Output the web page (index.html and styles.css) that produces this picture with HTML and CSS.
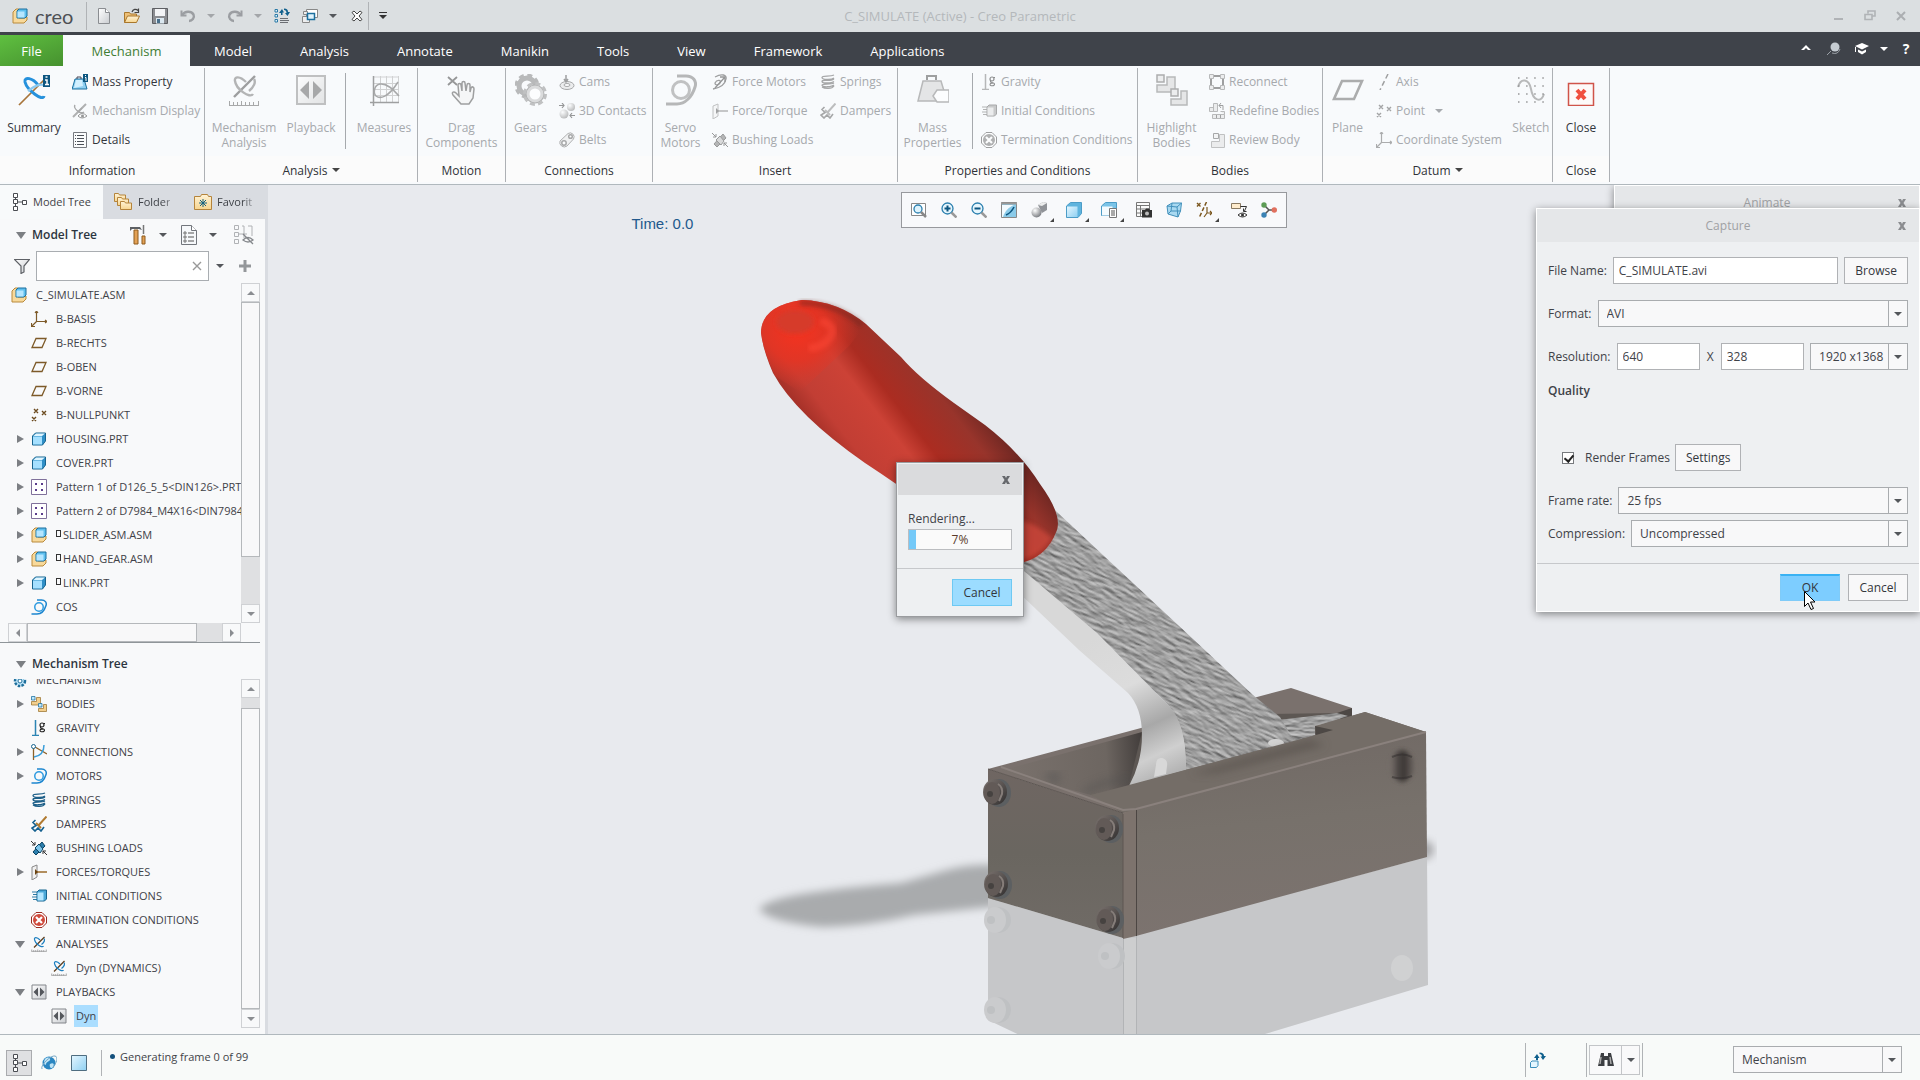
FILE: index.html
```html
<!DOCTYPE html>
<html lang="en">
<head>
<meta charset="utf-8">
<title>C_SIMULATE (Active) - Creo Parametric</title>
<link rel="stylesheet" href="styles.css">
</head>
<body>
<svg class="defs" aria-hidden="true">
  <defs>
    <linearGradient id="ice" x1="0" y1="0" x2="1" y2="1"><stop offset="0" stop-color="#e4f6ff"/><stop offset="1" stop-color="#8fd0f2"/></linearGradient>
    <linearGradient id="silver" x1="0" y1="0" x2="1" y2="1"><stop offset="0" stop-color="#fff"/><stop offset="1" stop-color="#c9ccd0"/></linearGradient>
    <linearGradient id="sand" x1="0" y1="0" x2="0" y2="1"><stop offset="0" stop-color="#fff3d6"/><stop offset="1" stop-color="#f7d590"/></linearGradient>
    <radialGradient id="ball" cx=".35" cy=".3" r=".8"><stop offset="0" stop-color="#fff"/><stop offset="1" stop-color="#6d7075"/></radialGradient>
  </defs>
  <symbol id="asm" viewBox="0 0 16 16"><path d="M1 4l3-3h3v9h5l3-1v3l-3 3H1z" fill="#f8d99a" stroke="#b98a3c"/><path d="M5 3l2-2h8v7l-2 2H5z" fill="#5fc0ef" stroke="#1b6f9e"/><path d="M5.500 3.500h7v6h-7z" fill="#b6e6ff"/></symbol>
  <symbol id="part" viewBox="0 0 16 16"><path d="M1.500 5l3-3h10v8l-3 4h-10z" fill="#2f8fc7" stroke="#17648f"/><path d="M2 5.500h9v8H2z" fill="#a5e0ff"/><path d="M2.500 5l2.500-2.500h9L11 5z" fill="#dff5ff"/></symbol>
  <symbol id="new" viewBox="0 0 16 16"><path d="M2.500.5h7l4 4v11h-11z" fill="url(#silver)" stroke="#8a8d91"/><path d="M9.500.5v4h4" fill="#fff" stroke="#8a8d91"/></symbol>
  <symbol id="open" viewBox="0 0 16 16"><path d="M.5 14.500v-10h5l1 1.500h6v3" fill="#eec077" stroke="#a9772c"/><path d="M.5 14.500l3-6.500h12l-3 6.500z" fill="url(#sand)" stroke="#a9772c"/><path d="M8 4c1-3 4-3.500 6-1.500M14.500.5v4h-4" fill="none" stroke="#444" stroke-width="1.200"/></symbol>
  <symbol id="save" viewBox="0 0 16 16"><path d="M.5.5h15v15h-15z" fill="#8b8d91" stroke="#5d5f63"/><path d="M3 1h10v7H3z" fill="#f3f4f6"/><path d="M4 10h8v5.500H4z" fill="#dbe8f0"/><path d="M5 11h3v4H5z" fill="#4a6f8a"/></symbol>
  <symbol id="undo" viewBox="0 0 16 16"><path d="M1.500 2.500v5h5" fill="none" stroke="#9b9ea2" stroke-width="2"/><path d="M2 7C5 3 11 2.500 13.500 6.500 15 10 12 13 9 13" fill="none" stroke="#9b9ea2" stroke-width="2.400"/></symbol>
  <symbol id="regen" viewBox="0 0 16 16"><path d="M1 1.500h2.500V4H1zM1 6.500h2.500V9H1zM1 11.500h2.500V14H1z" fill="#e2f4fd" stroke="#2b7aa6"/><path d="M6 10.500h8M6 12.500h9M6 14.500h8" stroke="#6b6e73"/><path d="M5 5l3-4 2 3.500H8.500V7H7V5zM16 4l-2.500 4L11 5h1.500c0-2-1-3-2.500-3V.5c3 0 4 1.500 4 3.500z" fill="#0f5f8c"/></symbol>
  <symbol id="windows" viewBox="0 0 16 16"><path d="M4.500 1.500h11v8h-11z" fill="#fff" stroke="#888"/><path d="M.5 8.500h7v6h-7zM1.500 3.500h4v3h-4z" fill="#eee" stroke="#888"/><path d="M5.500 5.500h7v6h-7z" fill="#dff3fd" stroke="#1b6f9e" stroke-width="1.500"/></symbol>
  <symbol id="closewin" viewBox="0 0 16 16"><path d="M3 4.500L5 3l3 3 3-3 2 1.500L10 8l3 3.500-2 1.500-3-3-3 3-2-1.500L6 8z" fill="#fff" stroke="#444"/></symbol>
  <symbol id="summary" viewBox="0 0 32 32"><path d="M1 31L27 5" stroke="#a8743a" stroke-width="1.700"/><path d="M26 22c-1 6-17-6-19-14-1-6 8-4 13 3" fill="none" stroke="#2691dc" stroke-width="3"/><path d="M10 17c7-6 14-8 17-5" fill="none" stroke="#8ccaf0" stroke-width="2.400"/><path d="M25 1h7v12h-7z" fill="#0d5680"/><path d="M27.500 3h2M27 6h2v4.500M27 10.500h4" fill="none" stroke="#fff" stroke-width="1.500"/></symbol>
  <symbol id="massinfo" viewBox="0 0 16 16"><path d="M3 5h9l3 10H0l1-3z" fill="#8fd0f2" stroke="#1b6f9e"/><path d="M5 5V3h4v2" fill="none" stroke="#445"/><path d="M4 6h6l1 6-9 2z" fill="#d3f0ff"/><path d="M11 0h5v8h-5z" fill="#0d5680"/><path d="M13 1.500h1M13 3.500h1V7" stroke="#fff" fill="none"/></symbol>
  <symbol id="mechdisp" viewBox="0 0 16 16"><path d="M1 14L14 1" stroke="#666" stroke-width="2"/><path d="M12 9C8 12 1 5 3 2M7 8l3-3" fill="none" stroke="#555" stroke-width="1.400"/><path d="M6 13q4-5 9 0-5 4-9 0z" fill="#fff" stroke="#333"/><circle cx="10.500" cy="13" r="1.500" fill="#333"/></symbol>
  <symbol id="details" viewBox="0 0 16 16"><path d="M1.500.5h13v15h-13z" fill="#fbfcfd" stroke="#777a80"/><path d="M5 3.500h7M5 6.500h7M5 9.500h7M5 12.500h7" stroke="#4c5058"/><path d="M3 3.500h1M3 6.500h1M3 9.500h1M3 12.500h1" stroke="#4c5058"/></symbol>
  <symbol id="analysis" viewBox="0 0 32 32"><path d="M6 23L27 2" stroke="#5e3d1a" stroke-width="2.400"/><path d="M25 20c-3 5-17-5-18-13-1-5 5-5 11 1M21 17c5-4 7-9 5-12" fill="none" stroke="#1c7fbf" stroke-width="2.400"/><path d="M1 31.500h30M1.500 31v-4M5.500 31v-3M9.500 31v-3M13.500 31v-4M17.500 31v-3M21.500 31v-3M25.500 31v-3M30.500 31v-4" stroke="#555" fill="none"/></symbol>
  <symbol id="play" viewBox="0 0 32 32"><path d="M2 2h28v28H2z" fill="url(#silver)" stroke="#83868b" stroke-width="2"/><path d="M14 7v18L5 16zM18 7v18l9-9z" fill="#54575c"/></symbol>
  <symbol id="measure" viewBox="0 0 32 32"><path d="M6 3h25M6 9.500h25M6 15.500h25M6 21.500h25M12.500 2v26M18.500 2v26M24.500 2v26M30.500 2v26" stroke="#a9abaf" fill="none"/><path d="M5.500 2v30M2 28.500h29" stroke="#444" stroke-width="1.500"/><path d="M30 8C20 24 12 25 8 22c-3-3-2-11 4-12 7-1 13 5 19 12" fill="none" stroke="#555" stroke-width="1.500"/></symbol>
  <symbol id="drag" viewBox="0 0 32 32"><path d="M2 3l9 8M11 3l-9 8" stroke="#333" stroke-width="1.800"/><path d="M15 30l-8-9c-2-3 1-4 3-2l3 3-1-11c0-2 3-2 3 0l1 6V9c0-2 3-2 3 0l1 8 1-6c0-2 3-2 3 0v7l1-4c1-2 3-1 3 1l-1 9-4 6z" fill="#f1f1f1" stroke="#444" stroke-width="1.500"/></symbol>
  <symbol id="gears" viewBox="0 0 32 32"><circle cx="12" cy="12" r="8" fill="none" stroke="#777" stroke-width="5"/><circle cx="12" cy="12" r="11" fill="none" stroke="#777" stroke-width="3" stroke-dasharray="5 3.640"/><circle cx="20" cy="20" r="7" fill="#fff" stroke="#666" stroke-width="5"/><circle cx="20" cy="20" r="7" fill="#fff" stroke="#bbb" stroke-width="3"/><circle cx="20" cy="20" r="10.500" fill="none" stroke="#888" stroke-width="3" stroke-dasharray="5 3.250"/></symbol>
  <symbol id="cam" viewBox="0 0 16 16"><ellipse cx="8" cy="11.500" rx="7" ry="4" fill="#ddd" stroke="#555"/><ellipse cx="8" cy="11" rx="3" ry="1.500" fill="#fff" stroke="#555"/><path d="M7 8V1M5 5l2 3 2-3" fill="none" stroke="#444" stroke-width="1.500"/></symbol>
  <symbol id="contact" viewBox="0 0 16 16"><circle cx="5" cy="11" r="4.500" fill="url(#ball)"/><circle cx="12" cy="4" r="4" fill="url(#ball)"/><path d="M0 2.500h5M3 0l2 2.500L3 5M16 12.500h-5M13 10l-2 2.500 2 2.500" fill="none" stroke="#333" stroke-width="1.200"/></symbol>
  <symbol id="belt" viewBox="0 0 16 16"><path d="M1 9L9 1.500a4 4 0 0 1 5.500 5.500L8 14a4.500 4.500 0 0 1-7-5z" fill="#e8e8e8" stroke="#666"/><circle cx="5" cy="11" r="2.200" fill="#fff" stroke="#555" stroke-width="1.500"/><circle cx="11.500" cy="4.500" r="1.800" fill="#fff" stroke="#555" stroke-width="1.500"/></symbol>
  <symbol id="motor" viewBox="0 0 32 32"><circle cx="16" cy="16" r="8.500" fill="none" stroke="#2e9be0" stroke-width="3"/><path d="M12 2h9c7 0 11 5 9 11-3 10-10 17-18 17H1" fill="none" stroke="#1c86cf" stroke-width="3"/></symbol>
  <symbol id="fmotor" viewBox="0 0 16 16"><path d="M3 3c7-4 12-2 11 2-1 6-7 9-13 10M3 9c2-4 7-3 5 0-1 2-5 3-5 0z" fill="none" stroke="#444" stroke-width="1.300"/><path d="M3 14L13 3M13 8V3H8" fill="none" stroke="#333" stroke-width="1.300"/></symbol>
  <symbol id="force" viewBox="0 0 16 16"><path d="M1 3l5-2v12l-5 3z" fill="#f1f1f1" stroke="#888"/><path d="M4 8h12" stroke="#9b6a2a" stroke-width="1.500"/><path d="M4 5v6l3-3z" fill="#6a4310"/></symbol>
  <symbol id="bushing" viewBox="0 0 16 16"><path d="M2 12l3 3 9-9-3-4z" fill="#2b7fae" stroke="#0b4363"/><path d="M4 8l5 5 3-4-4-5z" fill="#7dc5ea" stroke="#0b4363"/><path d="M0 1l4 4M4 2v3H1M16 15l-4-4M15 11h-3v3" fill="none" stroke="#333"/></symbol>
  <symbol id="spring" viewBox="0 0 16 16"><path d="M14 1C10 3 2 1 2 3.500S12 6 14 4M14 5c-4 3-12 0-12 2.500S12 9 14 7.500M14 9c-4 2-12 0-12 2.300S12 13 14 11M14 12c-2 3-9 3-12 1" fill="none" stroke="#1d5f88" stroke-width="1.300"/></symbol>
  <symbol id="damper" viewBox="0 0 16 16"><path d="M15.500.5L7 10M5 7l5 5" stroke="#b07a30" stroke-width="2"/><path d="M4.500 4L2 6.500l3 3L1 12l3 3 3-3 3 3 3-4" fill="none" stroke="#14608f" stroke-width="1.600"/></symbol>
  <symbol id="weight" viewBox="0 0 32 32"><path d="M6 7h18l6 20H1z" fill="#cfd0d2" stroke="#777" stroke-width="1.500"/><path d="M10 6V2h9v4" fill="none" stroke="#444" stroke-width="2"/><path d="M16 22l4-6h12v12H20z" fill="#fff" stroke="#777" stroke-width="1.500"/></symbol>
  <symbol id="gravity" viewBox="0 0 16 16"><path d="M4.500 0v15M1 15.500h7" stroke="#2b84b3" stroke-width="1.500"/><circle cx="11" cy="5" r="2" fill="none" stroke="#222" stroke-width="1.200"/><path d="M12.500 3.500H14M10 7c-2 2 3 1 3.500 3s-4.500 2.500-4.500.5 2-1 3-1.500" fill="none" stroke="#222" stroke-width="1.100"/></symbol>
  <symbol id="initial" viewBox="0 0 16 16"><path d="M1 4h5M2 6.500h4M1 9h5M2 11.500h4" stroke="#2e7ba5"/><path d="M6 4l2-2h7.500v9l-2 2H6z" fill="#4ba8d8" stroke="#17648f"/><path d="M6.500 4.500h6v8h-6z" fill="#b5e6ff"/></symbol>
  <symbol id="term" viewBox="0 0 16 16"><path d="M5 .5h6L15.500 5v6L11 15.500H5L.5 11V5z" fill="#fff" stroke="#9b2d22"/><circle cx="8" cy="8" r="6" fill="#cf4a3c"/><path d="M5 5l6 6M11 5l-6 6" stroke="#fff" stroke-width="2.200"/></symbol>
  <symbol id="bodies" viewBox="0 0 32 32"><path d="M1 11h10V3h8v15H1zM15 25h10v-8h6v14H15z" fill="#f3cf8d" stroke="#9a7430" stroke-width="1.500"/><path d="M1 1h7v7H1zM15 15h7v7h-7z" fill="#bfe8fb" stroke="#1b6f9e" stroke-width="1.500"/></symbol>
  <symbol id="reconnect" viewBox="0 0 16 16"><path d="M5 2h6M5 14h6M2 5v6M14 5v6" stroke="#444" stroke-width="2"/><path d="M.5.5h4v4h-4zM11.500.5h4v4h-4zM.5 11.500h4v4h-4zM11.500 11.500h4v4h-4z" fill="#ddd" stroke="#777"/></symbol>
  <symbol id="redefine" viewBox="0 0 16 16"><path d="M.5 4.500h4v4h-4zM4.500.5h4v8h-4zM3.500 11.500h12v4h-12zM11.500 8.500h4v3" fill="#ddd" stroke="#777"/><path d="M7.500 12v3M11.500 12v3M10 2.500h4V7M12 0l-2 2.500L12 5" stroke="#444" fill="none"/></symbol>
  <symbol id="review" viewBox="0 0 16 16"><path d="M2.500 9.500h8v-7h5v13h-13z" fill="#ddd" stroke="#888"/><path d="M4.500 1.500h5v5h-5z" fill="#eee" stroke="#555"/></symbol>
  <symbol id="plane" viewBox="0 0 16 16"><path d="M5 3.500h10l-4 9H1z" fill="none" stroke="#7d5a28" stroke-width="1.300"/></symbol>
  <symbol id="axis" viewBox="0 0 16 16"><path d="M12 0L4 16" stroke="#444" stroke-width="1.500" stroke-dasharray="5 3"/></symbol>
  <symbol id="points" viewBox="0 0 16 16"><path d="M3 2l4 4M7 2L3 6M11 4l4 4M15 4l-4 4M1 10l4 4M5 10l-4 4" stroke="#6b4a1e" stroke-width="1.400"/></symbol>
  <symbol id="csys" viewBox="0 0 16 16"><path d="M5.500 0v10.500H16M5.500 10.500L.5 15.500M4 2l1.500-2L7 2M14 9l2 1.500-2 1.500M.5 12v3.500H4" fill="none" stroke="#7d5a28" stroke-width="1.200"/></symbol>
  <symbol id="sketch" viewBox="0 0 32 32"><path d="M3 13c3-10 11-8 13 2 2 12 10 14 13 5" fill="none" stroke="#777" stroke-width="2"/><path d="M3 4h27M3 12h27M3 20h27M3 28h27" stroke="#333" stroke-dasharray="1.500 6.600" stroke-width="1.500"/></symbol>
  <symbol id="closebox" viewBox="0 0 32 32"><path d="M3.500 9.500h25v22h-25z" fill="#fdfaf9" stroke="#d0544a" stroke-width="1.500"/><path d="M12 16l8 9M20 16l-8 9" stroke="#f0503f" stroke-width="4"/></symbol>
  <symbol id="tree" viewBox="0 0 16 20"><path d="M2.500 1.500h4v4h-4zM2.500 7.500h4v4h-4zM2.500 14.500h4v4h-4zM11.500 8.500h4v4h-4z" fill="#fff" stroke="#4a4d52"/><path d="M4.500 5.500v2M4.500 11.500v3M6.500 10h5" stroke="#4a4d52"/></symbol>
  <symbol id="folders" viewBox="0 0 20 20"><path d="M1.500 9.500v-8h4l1 1.500h6v6.500z" fill="url(#sand)" stroke="#b5843b"/><path d="M4.500 13.500v-8h4l1 1.500h6v6.500z" fill="url(#sand)" stroke="#b5843b"/><path d="M7.500 17.500v-8h4l1 1.500h6v6.500z" fill="url(#sand)" stroke="#b5843b"/></symbol>
  <symbol id="fav" viewBox="0 0 18 16"><path d="M.5 15.500v-13h6l1-2h6l1 2h3v13z" fill="url(#sand)" stroke="#b5843b"/><path d="M9 5v8M5 9h8M6 6l6 6M12 6l-6 6" stroke="#14607f"/></symbol>
  <symbol id="tools" viewBox="0 0 18 20"><path d="M1 2h10l2 3-3-1H3L1 6z" fill="#5d6064"/><path d="M5 5h4v14H5z" fill="#e3a155" stroke="#8d5a1c"/><path d="M14.500 0v9" stroke="#777" stroke-width="1.500"/><path d="M13 11h3v8h-3z" fill="#e3a155" stroke="#8d5a1c"/></symbol>
  <symbol id="list" viewBox="0 0 16 20"><path d="M.5.5h10l5 5v14H.5z" fill="#f6f8fa" stroke="#72767c"/><path d="M10.500.5v5h5" fill="#fff" stroke="#72767c"/><path d="M7 8h6M7 12h6M7 16h6" stroke="#555"/><path d="M3 7h2v2H3zM3 11h2v2H3zM3 15h2v2H3z" fill="#fff" stroke="#555" stroke-width=".8"/></symbol>
  <symbol id="treehide" viewBox="0 0 20 20"><path d="M.5.5h4v4h-4zM.5 7.500h4v4h-4zM.5 14.500h4v4h-4zM8 1h2v12M14 1h4v10M5 9h8" fill="none" stroke="#b0b2b5"/><path d="M9 15q5-5 10 0-5 4-10 0zM9 9l10 10" fill="none" stroke="#85888c" stroke-width="1.300"/></symbol>
  <symbol id="funnel" viewBox="0 0 16 16"><path d="M.5 1.500h15L10 8v6l-3 1.500V8z" fill="url(#silver)" stroke="#5e6166" stroke-width="1.200"/></symbol>
  <symbol id="pattern" viewBox="0 0 16 16"><path d="M.5.500h15v15H.5z" fill="#fff" stroke="#80719b"/><path d="M4 4h2v2H4zM10 4h2v2h-2zM4 10h2v2H4zM10 10h2v2h-2z" fill="#5b3d8c"/></symbol>
  <symbol id="mech" viewBox="0 0 16 16"><circle cx="9" cy="9" r="5" fill="#bfe6fa" stroke="#1f6f9b" stroke-width="2.500" stroke-dasharray="2.500 1.200"/><circle cx="9" cy="9" r="2" fill="#fff" stroke="#1f6f9b"/><path d="M0 5h5" stroke="#555" stroke-width="2"/></symbol>
  <symbol id="conn" viewBox="0 0 16 16"><path d="M2.500 4v12M4 3l12 7" stroke="#8d6128" stroke-width="1.300"/><path d="M13 1c0 7-4 11-10 12" fill="none" stroke="#3b9fda" stroke-width="1.500"/><circle cx="2.500" cy="2.500" r="2" fill="#fff" stroke="#17648f"/></symbol>
  <symbol id="zoomfit" viewBox="0 0 16 16"><path d="M.5 1.500h14v12H.5z" fill="#fff" stroke="#888"/><circle cx="7" cy="7" r="4" fill="#def3fc" stroke="#2b7fae" stroke-width="1.300"/><path d="M10 10l5 5" stroke="#888" stroke-width="2.500"/></symbol>
  <symbol id="zoomin" viewBox="0 0 16 16"><circle cx="6.500" cy="6.500" r="5.500" fill="#e6f6fd" stroke="#2b7fae" stroke-width="1.300"/><path d="M3.500 6.500h6M6.500 3.500v6" stroke="#0c5580" stroke-width="2"/><path d="M10.500 10.500l5 5" stroke="#999" stroke-width="2.500"/></symbol>
  <symbol id="zoomout" viewBox="0 0 16 16"><circle cx="6.500" cy="6.500" r="5.500" fill="#e6f6fd" stroke="#2b7fae" stroke-width="1.300"/><path d="M3.500 6.500h6" stroke="#0c5580" stroke-width="2"/><path d="M10.500 10.500l5 5" stroke="#999" stroke-width="2.500"/></symbol>
  <symbol id="repaint" viewBox="0 0 16 16"><path d="M.5.500h15v15H.5z" fill="#8bcbe9" stroke="#888"/><path d="M1 3h12C8 5 4 9 2 15H1z" fill="#f3fbff"/><path d="M13 5Q10 11 5 13" stroke="#0c5580" stroke-width="1.600" fill="none"/><path d="M0 1.500h16" stroke="#999" stroke-width="2"/></symbol>
  <symbol id="render" viewBox="0 0 16 16"><path d="M7 3l5-3 4 1v7l-5 3z" fill="#909398"/><path d="M7 3l5-3 4 1-5 3z" fill="#eceded"/><circle cx="5.500" cy="10.500" r="5" fill="url(#ball)"/></symbol>
  <symbol id="shade" viewBox="0 0 16 16"><path d="M.5 4l4-3.500h11v11L12 15.500H.5z" fill="#5fb4de" stroke="#4c9cc7"/><path d="M1 4.500h10.500v10.500H1z" fill="url(#ice)"/></symbol>
  <symbol id="saved" viewBox="0 0 16 16"><path d="M.5 4l4-3.500h11v9L10 13.500H.5z" fill="#7bc4e8" stroke="#4c9cc7"/><path d="M1 4.500h10.500v9H1z" fill="#f4fbff"/><path d="M8.500 6.500h7v9h-7z" fill="#fff" stroke="#777"/><path d="M10 9h4M10 11h4M10 13h4" stroke="#555"/></symbol>
  <symbol id="viewmgr" viewBox="0 0 16 16"><path d="M.5.500h13v14H.5zM.5 3.500h13M4.500 3.500v11M.5 7h13M.5 11h13" fill="#fafafa" stroke="#777"/><path d="M6 8h3l1-1.500h3L14 8h2v7.500H6z" fill="#333"/><circle cx="11" cy="11.500" r="2" fill="#bbb"/></symbol>
  <symbol id="persp" viewBox="0 0 16 16"><path d="M1 4l5-3h9.500l-1 8L12 15 2 12z" fill="#a9d9f1" stroke="#4290bb"/><path d="M1 4l10 1 4.500-4M11 5l1 10M6 1L5 9l-3 3M5 9l9.500 0" fill="none" stroke="#4290bb"/></symbol>
  <symbol id="datums" viewBox="0 0 16 16"><path d="M1 1l3.500 3.500M4.500 1L1 4.500" fill="none" stroke="#7b571f" stroke-width="1.400"/><path d="M10.500 0L3 16" stroke="#7b571f" stroke-width="1.500" stroke-dasharray="4 2"/><path d="M11 5v6h5M11 11l-3 4M14 9l2 2-2 2" fill="none" stroke="#7b571f" stroke-width="1.200"/></symbol>
  <symbol id="annot" viewBox="0 0 16 16"><path d="M.5 1.500h9v5h-9z" fill="#ffeccd" stroke="#8a7a62"/><path d="M9.500 4.500h6l-2 4.500M12.500 6.500v3h3" fill="none" stroke="#333"/><path d="M7 13q4.500-4 9 0-4.500 4-9 0z" fill="#fff" stroke="#333"/><circle cx="11.500" cy="13" r="1.500" fill="#333"/></symbol>
  <symbol id="spin" viewBox="0 0 16 16"><path d="M3 3l5 5M3 13l5-5h5" stroke="#555" stroke-width="1.500" fill="none"/><circle cx="3" cy="3" r="2.700" fill="#5d9c56"/><circle cx="3" cy="13" r="2.700" fill="#3b83b5"/><circle cx="13.300" cy="8" r="2.700" fill="#e0705f"/></symbol>
  <symbol id="globe" viewBox="0 0 16 16"><circle cx="8" cy="8" r="6.500" fill="#2a86c2"/><path d="M4 4c3-3 6-1 5 1s-3 1-4 4-3-2-1-5zM9 9c3-2 5 0 3 3s-4-1-3-3z" fill="#bfe4f6"/><path d="M1 14C-1 10 10 0 14 1s1 8-2 11" fill="none" stroke="#75a7c6"/></symbol>
  <symbol id="square" viewBox="0 0 16 16"><path d="M.5.500h15v15H.5z" fill="url(#ice)" stroke="#4f6d80"/></symbol>
  <symbol id="regenbox" viewBox="0 0 16 16"><path d="M.5 10.500L2 9h6v4.500L6.500 15.500h-6z" fill="#e4f6ff" stroke="#3b8dbb"/><path d="M4 6l3-4 2.500 4H8v2H6V6zM16 4l-3 4-2.500-3.500H12c0-1.500-1-2.500-2.500-2.500V.5C12.500.5 14 2 14 4z" fill="#0f5f8c"/></symbol>
  <symbol id="binoc" viewBox="0 0 16 16"><path d="M3 1h3v3h4V1h3l3 13H9.500V8h-3v6H0z" fill="#3c3e42"/><path d="M3 5l-1 7M12 5l1 7" stroke="#aaa" stroke-width="1.500"/></symbol>
</svg>

<header class="titlebar">
  <div class="brand"><svg class="i16"><use href="#asm"/></svg><span>creo</span></div>
  <div class="quick">
    <button aria-label="New"><svg class="i16"><use href="#new"/></svg></button>
    <button aria-label="Open"><svg class="i16"><use href="#open"/></svg></button>
    <button aria-label="Save"><svg class="i16"><use href="#save"/></svg></button>
    <button aria-label="Undo"><svg class="i16"><use href="#undo"/></svg><i class="caret pale"></i></button>
    <button aria-label="Redo"><svg class="i16 flip"><use href="#undo"/></svg><i class="caret pale"></i></button>
    <button aria-label="Regenerate"><svg class="i16"><use href="#regen"/></svg></button>
    <button aria-label="Windows"><svg class="i16"><use href="#windows"/></svg><i class="caret"></i></button>
    <button aria-label="Close window"><svg class="i16"><use href="#closewin"/></svg></button>
  </div>
  <button class="custom" aria-label="Customize toolbar"><svg width="10" height="8" viewBox="0 0 10 8"><path d="M1 0h8v1H1zM1 3h8L5 7z" fill="#333"/></svg></button>
  <h1>C_SIMULATE (Active) - Creo Parametric</h1>
  <div class="wincontrols">
    <button aria-label="Minimize"><svg class="i12" viewBox="0 0 12 12"><path d="M1 8h9v2H1z" fill="#b0b3b6"/></svg></button>
    <button aria-label="Restore"><svg class="i12" viewBox="0 0 12 12"><path d="M4 3.500V1h7v5H8M1 4.500h7v5H1z" fill="none" stroke="#b0b3b6" stroke-width="1.600"/></svg></button>
    <button aria-label="Close"><svg class="i12" viewBox="0 0 12 12"><path d="M2 2l8 8M10 2l-8 8" stroke="#abaeb1" stroke-width="2"/></svg></button>
  </div>
</header>

<nav class="tabbar">
  <a class="file" href="#file">File</a>
  <a class="active" href="#mechanism">Mechanism</a>
  <a href="#model">Model</a><a href="#analysis-tab">Analysis</a><a href="#annotate">Annotate</a><a href="#manikin">Manikin</a><a href="#tools-tab">Tools</a><a href="#view">View</a><a href="#framework">Framework</a><a href="#applications">Applications</a>
  <div class="help">
    <button aria-label="Collapse ribbon"><svg class="i16" viewBox="0 0 16 16"><path d="M3 9l5-5 5 5h-3L8 7 6 9z" fill="#fff"/></svg></button>
    <button aria-label="Search"><svg class="i16" viewBox="0 0 16 16"><circle cx="9" cy="6" r="4.500" fill="#c5ccd2"/><path d="M1 14l4-4M6 12q6 2 8-4" stroke="#9aa0a6" fill="none"/></svg></button>
    <button aria-label="Learning"><svg class="i16" viewBox="0 0 16 16"><path d="M8 2l7 3-7 3.500L1 5z" fill="#fff"/><path d="M4 8.500l4 2 4-2V11l-4 2.500L4 11z" fill="#fff"/><path d="M1.500 6v5" stroke="#fff"/></svg><i class="caret white"></i></button>
    <button class="qm" aria-label="Help">?</button>
  </div>
</nav>

<section class="ribbon" aria-label="Mechanism ribbon">
  <div class="group g-info"><div class="gbody">
    <button class="big"><svg><use href="#summary"/></svg>Summary</button>
    <div class="col"><button><svg><use href="#massinfo"/></svg>Mass Property</button><button class="off"><svg><use href="#mechdisp"/></svg>Mechanism Display</button><button><svg><use href="#details"/></svg>Details</button></div>
  </div><h2>Information</h2></div>
  <div class="group g-ana"><div class="gbody">
    <button class="big off"><svg><use href="#analysis"/></svg>Mechanism<br>Analysis</button>
    <button class="big off"><svg><use href="#play"/></svg>Playback</button>
    <i class="rule"></i>
    <button class="big off"><svg><use href="#measure"/></svg>Measures</button>
  </div><h2>Analysis <i class="caret"></i></h2></div>
  <div class="group g-motion"><div class="gbody">
    <button class="big off"><svg><use href="#drag"/></svg>Drag<br>Components</button>
  </div><h2>Motion</h2></div>
  <div class="group g-conn"><div class="gbody">
    <button class="big off"><svg><use href="#gears"/></svg>Gears</button>
    <div class="col off"><button><svg><use href="#cam"/></svg>Cams</button><button><svg><use href="#contact"/></svg>3D Contacts</button><button><svg><use href="#belt"/></svg>Belts</button></div>
  </div><h2>Connections</h2></div>
  <div class="group g-insert"><div class="gbody">
    <button class="big off"><svg><use href="#motor"/></svg>Servo<br>Motors</button>
    <div class="col off"><button><svg><use href="#fmotor"/></svg>Force Motors</button><button><svg><use href="#force"/></svg>Force/Torque</button><button><svg><use href="#bushing"/></svg>Bushing Loads</button></div>
    <div class="col off"><button><svg><use href="#spring"/></svg>Springs</button><button><svg><use href="#damper"/></svg>Dampers</button></div>
  </div><h2>Insert</h2></div>
  <div class="group g-prop"><div class="gbody">
    <button class="big off"><svg><use href="#weight"/></svg>Mass<br>Properties</button>
    <i class="rule"></i>
    <div class="col off"><button><svg><use href="#gravity"/></svg>Gravity</button><button><svg><use href="#initial"/></svg>Initial Conditions</button><button><svg><use href="#term"/></svg>Termination Conditions</button></div>
  </div><h2>Properties and Conditions</h2></div>
  <div class="group g-bod"><div class="gbody">
    <button class="big off"><svg><use href="#bodies"/></svg>Highlight<br>Bodies</button>
    <div class="col off"><button><svg><use href="#reconnect"/></svg>Reconnect</button><button><svg><use href="#redefine"/></svg>Redefine Bodies</button><button><svg><use href="#review"/></svg>Review Body</button></div>
  </div><h2>Bodies</h2></div>
  <div class="group g-datum"><div class="gbody">
    <button class="big off"><svg><use href="#plane"/></svg>Plane</button>
    <div class="col off"><button><svg><use href="#axis"/></svg>Axis</button><button><svg><use href="#points"/></svg>Point <i class="caret far"></i></button><button><svg><use href="#csys"/></svg>Coordinate System</button></div>
    <button class="big off"><svg><use href="#sketch"/></svg>Sketch</button>
  </div><h2>Datum <i class="caret"></i></h2></div>
  <div class="group g-close"><div class="gbody">
    <button class="big"><svg><use href="#closebox"/></svg>Close</button>
  </div><h2>Close</h2></div>
</section>

<main class="work">
  <aside class="side">
    <nav class="sidetabs">
      <a class="on" href="#mt"><svg width="16" height="20"><use href="#tree"/></svg>Model Tree</a>
      <a class="folder" href="#fb"><svg width="20" height="20"><use href="#folders"/></svg><span>Folder</span></a>
      <a class="favs" href="#fv"><svg width="18" height="16"><use href="#fav"/></svg><span>Favorit</span></a>
    </nav>
    <div class="panel">
      <div class="phead"><i class="tri down"></i><h3>Model Tree</h3>
        <button class="t1" aria-label="Settings"><svg width="18" height="20"><use href="#tools"/></svg><i class="caret"></i></button>
        <button aria-label="Show"><svg width="16" height="20"><use href="#list"/></svg><i class="caret"></i></button>
        <button aria-label="Hide"><svg width="20" height="20"><use href="#treehide"/></svg></button>
      </div>
      <div class="filter"><svg class="i16"><use href="#funnel"/></svg>
        <label class="search"><input type="text" aria-label="Filter"><svg class="clear" viewBox="0 0 10 10"><path d="M1 1l8 8M9 1L1 9" stroke="#999" stroke-width="1.400"/></svg></label>
        <i class="caret"></i><button aria-label="Add"><svg class="i12" viewBox="0 0 12 12"><path d="M6 0v12M0 6h12" stroke="#94979a" stroke-width="3"/></svg></button>
      </div>
      <div class="treebox model">
        <ul class="tree">
          <li class="l0"><svg><use href="#asm"/></svg>C_SIMULATE.ASM</li>
          <li><svg><use href="#csys"/></svg>B-BASIS</li>
          <li><svg><use href="#plane"/></svg>B-RECHTS</li>
          <li><svg><use href="#plane"/></svg>B-OBEN</li>
          <li><svg><use href="#plane"/></svg>B-VORNE</li>
          <li><svg><use href="#points"/></svg>B-NULLPUNKT</li>
          <li class="shut"><svg><use href="#part"/></svg>HOUSING.PRT</li>
          <li class="shut"><svg><use href="#part"/></svg>COVER.PRT</li>
          <li class="shut"><svg><use href="#pattern"/></svg>Pattern 1 of D126_5_5&lt;DIN126&gt;.PRT</li>
          <li class="shut"><svg><use href="#pattern"/></svg>Pattern 2 of D7984_M4X16&lt;DIN7984</li>
          <li class="shut"><svg><use href="#asm"/></svg><b class="mark"></b>SLIDER_ASM.ASM</li>
          <li class="shut"><svg><use href="#asm"/></svg><b class="mark"></b>HAND_GEAR.ASM</li>
          <li class="shut"><svg><use href="#part"/></svg><b class="mark"></b>LINK.PRT</li>
          <li><svg><use href="#motor"/></svg>COS</li>
        </ul>
        <div class="vbar"><i class="sb up"></i><i class="thumb"></i><i class="track"></i><i class="sb dn"></i></div>
        <div class="hbar"><i class="sb lt"></i><i class="thumb"></i><i class="track"></i><i class="sb rt"></i></div>
      </div>
      <div class="phead second"><i class="tri down"></i><h3>Mechanism Tree</h3></div>
      <div class="treebox mechtree">
        <ul class="tree">
          <li class="l0"><svg><use href="#mech"/></svg>MECHANISM</li>
          <li class="shut"><svg><use href="#bodies"/></svg>BODIES</li>
          <li><svg><use href="#gravity"/></svg>GRAVITY</li>
          <li class="shut"><svg><use href="#conn"/></svg>CONNECTIONS</li>
          <li class="shut"><svg><use href="#motor"/></svg>MOTORS</li>
          <li><svg><use href="#spring"/></svg>SPRINGS</li>
          <li><svg><use href="#damper"/></svg>DAMPERS</li>
          <li><svg><use href="#bushing"/></svg>BUSHING LOADS</li>
          <li class="shut"><svg><use href="#force"/></svg>FORCES/TORQUES</li>
          <li><svg><use href="#initial"/></svg>INITIAL CONDITIONS</li>
          <li><svg><use href="#term"/></svg>TERMINATION CONDITIONS</li>
          <li class="open"><svg><use href="#analysis"/></svg>ANALYSES</li>
          <li class="l2"><svg><use href="#analysis"/></svg>Dyn (DYNAMICS)</li>
          <li class="open"><svg><use href="#play"/></svg>PLAYBACKS</li>
          <li class="l2"><svg><use href="#play"/></svg><mark>Dyn</mark></li>
        </ul>
        <div class="vbar"><i class="sb up"></i><i class="track"></i><i class="thumb"></i><i class="sb dn"></i></div>
      </div>
    </div>
  </aside>

  <section class="stage" aria-label="Graphics area">
    <svg class="scene" viewBox="268 185 1652 849" preserveAspectRatio="xMidYMid slice">
      <defs>
        <linearGradient id="grip" gradientUnits="userSpaceOnUse" x1="840" y1="458" x2="958" y2="366"><stop offset="0" stop-color="#a83229"/><stop offset=".12" stop-color="#c23e34"/><stop offset=".38" stop-color="#cc4236"/><stop offset=".52" stop-color="#ab2c21"/><stop offset=".78" stop-color="#98342b"/><stop offset="1" stop-color="#642420"/></linearGradient>
        <radialGradient id="tip" gradientUnits="userSpaceOnUse" cx="797" cy="330" r="62"><stop offset="0" stop-color="#f5321f"/><stop offset=".5" stop-color="#e63423" stop-opacity=".85"/><stop offset="1" stop-color="#d83a2c" stop-opacity="0"/></radialGradient>
        <linearGradient id="side" gradientUnits="userSpaceOnUse" x1="1090" y1="640" x2="1160" y2="790"><stop offset="0" stop-color="#d8d8d8"/><stop offset=".35" stop-color="#dcdcdc"/><stop offset=".62" stop-color="#a8a8a8"/><stop offset=".8" stop-color="#cfcfcf"/><stop offset="1" stop-color="#a9a9a9"/></linearGradient>
        <linearGradient id="front" x1="0" y1="0" x2="0" y2="1"><stop offset="0" stop-color="#6f6662"/><stop offset=".5" stop-color="#6a6660"/><stop offset="1" stop-color="#706b66"/></linearGradient>
        <linearGradient id="flank" x1="0" y1="0" x2=".15" y2="1"><stop offset="0" stop-color="#706864"/><stop offset=".5" stop-color="#77716b"/><stop offset="1" stop-color="#7c736f"/></linearGradient>
        <linearGradient id="well" gradientUnits="userSpaceOnUse" x1="1000" y1="770" x2="1142" y2="760"><stop offset="0" stop-color="#7a726d"/><stop offset=".75" stop-color="#6d6661"/><stop offset="1" stop-color="#443f3d"/></linearGradient>
        <linearGradient id="bolt" x1="0" y1="0" x2="1" y2="1"><stop offset="0" stop-color="#7c7470"/><stop offset=".5" stop-color="#5a5452"/><stop offset="1" stop-color="#2f2d2d"/></linearGradient>
        <linearGradient id="bore" x1="0" y1="0" x2="1" y2="0"><stop offset="0" stop-color="#7a726d"/><stop offset=".35" stop-color="#4a4543"/><stop offset=".6" stop-color="#3d3836"/><stop offset="1" stop-color="#6b6460"/></linearGradient>
        <filter id="soft" x="-10%" y="-30%" width="120%" height="160%"><feGaussianBlur stdDeviation="4"/></filter>
        <filter id="faint" x="-20%" y="-20%" width="140%" height="140%"><feGaussianBlur stdDeviation="2"/></filter>
        <filter id="brushed" x="0" y="0" width="100%" height="100%" color-interpolation-filters="sRGB"><feTurbulence type="fractalNoise" baseFrequency=".07 .26" numOctaves="3" seed="4"/><feDiffuseLighting surfaceScale="1" lighting-color="#c6c6c6" diffuseConstant="1.050"><feDistantLight azimuth="260" elevation="50"/></feDiffuseLighting></filter>
        <clipPath id="blade"><path d="M1024 480L1058 513 1253 695 1280 717 1294 740 1316 735 1186 770Q1187 724 1168 705L1097 633 1018 566z"/></clipPath>
        <clipPath id="lnk"><path d="M1262 722L1337 713 1348 716 1315 727V735L1270 750z"/></clipPath>
        <g id="screw"><ellipse cx="4" cy="1" rx="12" ry="14" fill="#5c5f61"/><ellipse rx="12" ry="13" fill="url(#bolt)"/><ellipse cx="-3" cy="1" rx="8" ry="11" fill="#625a57"/><path d="M3-8q5 3 4 10l-3 7" stroke="#857d79" stroke-width="2" fill="none"/><circle cx="-5" cy="2" r="3" fill="#464240"/></g>
        <g id="ghost"><circle cx="3" r="13" fill="#bfc1c3"/><ellipse rx="11" ry="13" fill="#cacbcd"/><circle cx="-4" r="4" fill="#bfc1c3"/></g>
      </defs>
      <path d="M1000 865Q968 864 947 870T901 883Q850 887 809 893T759 909Q768 922 823 927 868 926 914 915L1000 906z" fill="#a9abad" filter="url(#soft)"/>
      <ellipse cx="1420" cy="850" rx="14" ry="10" fill="#a5a5a7" filter="url(#soft)"/>
      <path d="M988 898L1123 938 1427 857 1428 985 1245 1040H1030L988 1020z" fill="#c6c7c9"/>
      <path d="M1123 938h13v102h-13z" fill="#cdcecf"/><path d="M1123.500 938v102M1136.500 936v104" stroke="#b2b4b6"/>
      <use href="#ghost" x="995" y="920"/><use href="#ghost" x="1109" y="956"/><use href="#ghost" x="995" y="1010"/>
      <ellipse cx="1402" cy="968" rx="11" ry="13" fill="#d0d1d2"/>
      <path d="M988 769L1141 728 1291 688 1352 708 1352 716 1365 712 1426 732 1134 812 1123 813z" fill="#7a716d"/>
      <path d="M1000 771L1142 732V784L1091 795z" fill="url(#well)"/>
      <path d="M1142 732L1262 714 1337 713 1315 735 1129 785z" fill="#5d5753"/>
      <path d="M1337 713l15-5v10l-10 4z" fill="#4d4845"/>
      <path d="M1045 778q20-8 8 6M1084 792q26-14 50-12" stroke="#4f4f50" stroke-width="6" fill="none" opacity=".45" filter="url(#soft)"/>
      <g clip-path="url(#lnk)"><rect x="1250" y="700" width="110" height="60" filter="url(#brushed)"/></g>
      <path d="M1018 592L1079 650 1128 693Q1142 708 1142 735T1129 786L1186 770Q1188 724 1168 705L1097 633 1018 564z" fill="url(#side)"/>
      <g clip-path="url(#blade)"><g transform="rotate(26 1160 640)"><rect x="950" y="400" width="420" height="460" filter="url(#brushed)"/></g></g>
      <path d="M1156 765q0-8 6-7 6 1 5 8l-1 8-12 3z" fill="#d8d8d8"/><ellipse cx="1276" cy="743" rx="8" ry="4" fill="#d4d4d4"/>
      <path d="M1091 795L1129 785 1316 735 1315 726 1365 712 1426 732 1136 810 1123 813z" fill="#746d67"/>
      <path d="M1315 726l18 4-17 5z" fill="#4d4845"/>
      <path d="M1190 774l120-34 16 5-110 28z" fill="#4b4541" opacity=".5" filter="url(#soft)"/>
      <path d="M988 769L1123 813V938L988 898z" fill="url(#front)"/>
      <path d="M1136 810L1426 732 1427 857 1136 936z" fill="url(#flank)"/>
      <path d="M1123 813L1136 809V936L1123 939z" fill="#7d736d"/>
      <path d="M1136.500 810v126" stroke="#4c4643"/><path d="M1123 814v124M988 769l135 44" stroke="#5e5753"/><path d="M1001 767l122 43 13-1 290-77" stroke="#8a817d" fill="none" stroke-width="2"/>
      <ellipse cx="1402" cy="766" rx="12" ry="16" fill="url(#bore)" filter="url(#faint)"/><path d="M1392 757q10-5 20 0M1392 777q10 3 20-1" stroke="#2f2c2b" stroke-width="2" fill="none" opacity=".5"/>
      <use href="#screw" x="995" y="792"/><use href="#screw" x="1107" y="828"/><use href="#screw" x="996" y="884"/><use href="#screw" x="1108" y="919"/>
      <path d="M761 333Q761 306 802 300 838 301 866 324 884 341 901 357 918 377 954 403L985 425Q1020 452 1040 484 1062 514 1057 530 1046 560 1015 564 980 556 940 515 900 486 865 463 796 415 773 373 763 350 761 333z" fill="url(#grip)"/>
      <path d="M761 333Q761 306 802 300 838 301 866 324L850 345 800 392 775 376Q763 350 761 333z" fill="url(#tip)"/>
      <path d="M800 303q36 0 62 22" stroke="#6e241e" stroke-width="5" fill="none" opacity=".5" filter="url(#faint)"/>
      <ellipse cx="795" cy="322" rx="19" ry="12" fill="#d63a2c" filter="url(#faint)"/><path d="M824 322q10 4 8 12-6 12-20 14" stroke="#ff4a38" stroke-width="8" fill="none" opacity=".5" stroke-linecap="round" filter="url(#faint)"/>
      <path d="M1018 520q16 2 34 18-12 20-34 22z" fill="#c9463a" opacity=".8" filter="url(#faint)"/>
    </svg>
    <div class="clock">Time: 0.0</div>
    <div class="viewbar" role="toolbar">
      <button aria-label="Refit"><svg class="i16"><use href="#zoomfit"/></svg></button><button aria-label="Zoom in"><svg class="i16"><use href="#zoomin"/></svg></button><button aria-label="Zoom out"><svg class="i16"><use href="#zoomout"/></svg></button><button aria-label="Repaint"><svg class="i16"><use href="#repaint"/></svg></button><button class="dd" aria-label="Rendering options"><svg class="i16"><use href="#render"/></svg></button><button class="dd" aria-label="Display style"><svg class="i16"><use href="#shade"/></svg></button><button class="dd" aria-label="Saved orientations"><svg class="i16"><use href="#saved"/></svg></button><button aria-label="View manager"><svg class="i16"><use href="#viewmgr"/></svg></button><button aria-label="Perspective"><svg class="i16"><use href="#persp"/></svg></button><button class="dd" aria-label="Datum display"><svg class="i16"><use href="#datums"/></svg></button><button aria-label="Annotation display"><svg class="i16"><use href="#annot"/></svg></button><button aria-label="Spin center"><svg class="i16"><use href="#spin"/></svg></button>
    </div>

    <div class="dialog animate"><div class="dtitle">Animate<button aria-label="Close"><svg class="x" viewBox="0 0 10 10"><path d="M1 1h3l1 2 1-2h3L6.500 5 9 9H6L5 7 4 9H1l2.500-4z"/></svg></button></div></div>

    <form class="dialog capture">
      <div class="dtitle">Capture<button type="button" aria-label="Close"><svg class="x" viewBox="0 0 10 10"><path d="M1 1h3l1 2 1-2h3L6.500 5 9 9H6L5 7 4 9H1l2.500-4z"/></svg></button></div>
      <div class="fields">
        <div class="row"><label for="fn">File Name:</label><input id="fn" class="grow" type="text" value="C_SIMULATE.avi"><button type="button" class="btn">Browse</button></div>
        <div class="row"><label for="fmt">Format:</label><span class="combo grow"><select id="fmt"><option>AVI</option></select></span></div>
        <div class="row"><label for="rw">Resolution:</label><input id="rw" class="num" type="text" value="640"><label for="rh" class="by">X</label><input id="rh" class="num" type="text" value="328"><span class="combo preset"><select aria-label="Preset"><option>1920 x1368</option></select></span></div>
        <h4>Quality</h4>
        <div class="row check"><input id="rf" type="checkbox" checked><label for="rf">Render Frames</label><button type="button" class="btn">Settings</button></div>
        <div class="row"><label for="fr">Frame rate:</label><span class="combo grow"><select id="fr"><option>25 fps</option></select></span></div>
        <div class="row tight"><label for="cp">Compression:</label><span class="combo grow"><select id="cp"><option>Uncompressed</option></select></span></div>
      </div>
      <div class="actions"><button type="button" class="btn ok">OK</button><button type="button" class="btn wide">Cancel</button></div>
      <svg class="cursor" viewBox="0 0 12 19"><path d="M.5.500v15l3.500-3.500 3 6.500 2.500-1-3-6.500H11z" fill="#fff" stroke="#000"/></svg>
    </form>

    <div class="dialog rendering">
      <div class="dtitle"><button aria-label="Close"><svg class="x" viewBox="0 0 10 10"><path d="M1 1h3l1 2 1-2h3L6.500 5 9 9H6L5 7 4 9H1l2.500-4z"/></svg></button></div>
      <div class="pbody"><p>Rendering...</p><div class="progress" role="progressbar" aria-valuenow="7"><i style="width:7%"></i><span>7%</span></div></div>
      <div class="actions"><button class="btn stop">Cancel</button></div>
    </div>
  </section>
</main>

<footer class="status">
  <button class="pressed" aria-label="Toggle tree"><svg width="16" height="20"><use href="#tree"/></svg></button>
  <button aria-label="Browser"><svg class="i16"><use href="#globe"/></svg></button>
  <button aria-label="Full screen"><svg class="i16"><use href="#square"/></svg></button>
  <p><i></i>Generating frame 0 of 99</p>
  <div class="right">
    <button class="rg" aria-label="Regeneration"><svg class="i16"><use href="#regenbox"/></svg></button>
    <div class="find"><button aria-label="Find"><svg class="i16"><use href="#binoc"/></svg></button><button aria-label="Find options"><i class="caret"></i></button></div>
    <span class="combo selfilter"><select aria-label="Selection filter"><option>Mechanism</option></select></span>
  </div>
</footer>
</body>
</html>
```
FILE: styles.css
```css
* { box-sizing: border-box; }
body {
  margin: 0;
  height: 100vh;
  display: flex;
  flex-direction: column;
  overflow: hidden;
  font: 12px/16px "Open Sans", "Noto Sans", sans-serif;
  color: #3f4248;
  background: #f8f9fb;
}
button, input, select { font: inherit; color: inherit; margin: 0; }
button { border: 0; background: none; padding: 0; }
h1, h2, h3, h4, p, ul { margin: 0; padding: 0; font: inherit; }
a { color: inherit; text-decoration: none; }
svg { flex: none; display: block; }
.defs { position: absolute; width: 0; height: 0; }
.i16 { width: 16px; height: 16px; }
.i12 { width: 12px; height: 12px; }
.caret {
  flex: none;
  display: inline-block;
  border: 4px solid transparent;
  border-top-color: #54575b;
  border-bottom: 0;
}
.caret.pale { border-top-color: #a3a6a9; }
.caret.white { border-top-color: #fff; }

/* title bar */
.titlebar {
  position: relative;
  flex: none;
  display: flex;
  align-items: center;
  height: 32px;
  background: #dbdfe1;
}
.brand {
  display: flex;
  align-items: center;
  gap: 7px;
  width: 87px;
  height: 28px;
  padding-left: 12px;
  border-right: 1px solid #b0b3b6;
  font: 20px/20px Lato, sans-serif;
  color: #4d5054;
}
.quick {
  display: flex;
  align-items: center;
  gap: 12px;
  height: 28px;
  padding: 0 3px 0 9px;
  border-right: 1px solid #b0b3b6;
}
.quick button { display: flex; align-items: center; gap: 11px; }
.flip { transform: scaleX(-1); }
.custom { padding: 0 9px; display: flex; }
.titlebar h1 {
  position: absolute;
  left: 0;
  right: 0;
  text-align: center;
  pointer-events: none;
  font-size: 13px;
  color: #b4b8bb;
}
.wincontrols { margin-left: auto; display: flex; gap: 19px; padding-right: 13px; }

/* main tabs */
.tabbar {
  flex: none;
  display: flex;
  align-items: flex-end;
  height: 34px;
  background: #3f434a;
  color: #fff;
  font-size: 13px;
}
.tabbar a { padding: 0 24px; line-height: 32px; height: 31px; }
.tabbar .file { width: 63px; padding: 0; text-align: center; background: linear-gradient(160deg, #5fc040, #46912f); }
.tabbar .active { width: 127px; padding: 0; text-align: center; background: #f8fafc; color: #3f7d34; }
.help { margin-left: auto; display: flex; align-items: center; gap: 12px; height: 34px; padding-right: 8px; }
.help button { display: flex; align-items: center; gap: 10px; }
.help .qm { color: #fff; font-weight: 700; font-size: 14px; width: 12px; justify-content: center; }

/* ribbon */
.ribbon {
  flex: none;
  display: flex;
  height: 119px;
  padding: 2px 0;
  border-bottom: 1px solid #b0b8bd;
  background: #f8fafc;
}
.group {
  display: flex;
  flex-direction: column;
  border-right: 1px solid #adb0b4;
  flex: none;
}
.gbody { display: grid; flex: 1; min-height: 0; }
.group h2 { height: 26px; padding-top: 7px; text-align: center; color: #2f3238; background: #fbfbfb; }
.group h2 .caret { margin: 0 0 3px 1px; border-top-color: #444; }
.g-info { width: 205px; }
.g-info .gbody { grid-template-columns: 68px 1fr; }
.g-ana { width: 213px; }
.g-ana .gbody { grid-template-columns: 78px 56px 12px 1fr; }
.g-motion { width: 88px; }
.g-conn { width: 147px; }
.g-conn .gbody { grid-template-columns: 49px 1fr; }
.g-insert { width: 245px; }
.g-insert .gbody { grid-template-columns: 55px 108px 1fr; }
.g-prop { width: 240px; }
.g-prop .gbody { grid-template-columns: 69px 10px 1fr; }
.g-bod { width: 185px; }
.g-bod .gbody { grid-template-columns: 67px 1fr; }
.g-datum { width: 230px; }
.g-datum .gbody { grid-template-columns: 49px 1fr 58px; }
.g-close { width: 57px; }
.big {
  display: block;
  align-self: start;
  padding-top: 6px;
  line-height: 15px;
  text-align: center;
  white-space: nowrap;
  color: #33363c;
}
.big svg { width: 32px; height: 32px; margin: 0 auto 14px; }
.col { display: flex; flex-direction: column; margin-top: -1px; padding-left: 4px; color: #33363c; }
.col button { display: flex; align-items: center; gap: 4px; height: 29px; white-space: nowrap; }
.col svg { width: 16px; height: 16px; }
.off { color: #a6a9ad; }
.off svg { filter: grayscale(1) opacity(.5); }
.off .caret { border-top-color: #a6a9ad; }
.far { margin-left: 6px; }
.rule { width: 1px; height: 76px; margin: 5px auto; background: #a6a9ad; }

/* work area */
.work { flex: 1; min-height: 0; display: flex; }
.side { flex: none; width: 268px; display: flex; flex-direction: column; background: #d9dce1; }
.sidetabs { display: flex; height: 34px; overflow: hidden; font-size: 11px; }
.sidetabs a { display: flex; align-items: center; gap: 5px; white-space: nowrap; }
.sidetabs .on { width: 103px; padding-left: 11px; gap: 6px; background: #f8fafb; }
.folder { width: 84px; padding-left: 10px; }
.favs { width: 74px; padding-left: 7px; }
.folder span { mask-image: linear-gradient(90deg, #000 75%, #0008); }
.favs span { mask-image: linear-gradient(90deg, #000 75%, #0006); }
.panel { flex: 1; min-height: 0; margin-right: 3px; display: flex; flex-direction: column; background: #f8f9fa; }
.phead { flex: none; display: flex; align-items: center; height: 32px; padding: 0 11px 0 16px; }
.phead h3 { font-weight: 600; margin-left: 6px; font-size: 12px; color: #2c3540; }
.phead button { display: flex; align-items: center; gap: 12px; margin-right: 17px; }
.phead .t1 { margin: 0 14px 0 auto; }
.phead button:last-child { margin-right: 0; }
.tri.down { border: 5px solid transparent; border-top: 7px solid #7c7f83; border-bottom: 0; }
.filter { flex: none; display: flex; align-items: center; height: 30px; padding-left: 14px; }
.search { width: 173px; height: 30px; margin: 0 7px 0 6px; display: flex; align-items: center; border: 1px solid #a9adb1; background: #fff; }
.search input { flex: 1; min-width: 0; border: 0; outline: 0; background: none; }
.clear { width: 10px; height: 10px; margin-right: 6px; }
.filter button { margin-left: 15px; }
.treebox {
  display: grid;
  grid-template-columns: 1fr 19px;
  margin-right: 5px;
  min-height: 0;
  overflow: hidden;
}
.tree { list-style: none; min-width: 0; min-height: 0; overflow: hidden; font-size: 11px; }
.tree li { display: flex; align-items: center; height: 24px; padding-left: 31px; gap: 9px; white-space: nowrap; position: relative; }
.tree li.l0 { padding-left: 11px; }
.tree li.l2 { padding-left: 51px; }
.tree svg { width: 16px; height: 16px; }
.shut::before, .open::before { content: ""; position: absolute; left: 17px; border: 4px solid transparent; border-left: 7px solid #7c7f83; border-right: 0; }
.open::before { left: 15px; border: 5px solid transparent; border-top: 7px solid #7c7f83; border-bottom: 0; }
.tree mark { background: #abdeff; color: inherit; padding: 3px 2px; margin-left: -2px; }
.mark { width: 5px; height: 7px; border: 1px solid #333; margin: 0 -7px 4px 0; }
.model { flex: none; height: 360px; grid-template-rows: 340px 19px; border-bottom: 1px solid #8f9599; margin-top: 2px; }
.vbar, .hbar { display: flex; background: #dfe0e2; }
.vbar { flex-direction: column; }
.hbar { margin-left: 8px; height: 19px; }
.sb { flex: none; width: 19px; height: 19px; display: grid; place-items: center; border: 1px solid #cfd1d4; background: #f8f9fa; }
.sb::after { content: ""; border: 4px solid transparent; }
.up::after { border-bottom-color: #8a8d91; border-top: 0; }
.dn::after { border-top-color: #8a8d91; border-bottom: 0; }
.lt::after { border-right-color: #8a8d91; border-left: 0; }
.rt::after { border-left-color: #8a8d91; border-right: 0; }
.thumb { border: 1px solid #b5b8bb; background: #f8f8f9; }
.model .vbar .thumb { flex: 255; }
.model .vbar .track { flex: 47; }
.hbar .thumb { flex: 170; }
.hbar .track { flex: 25; }
.second { height: 36px; padding-top: 6px; }
.mechtree { flex: 1; margin-bottom: 6px; }
.mechtree .tree { margin-top: -11px; clip-path: inset(11px 0 0 0); }
.mechtree .vbar .track { flex: 10; }
.mechtree .vbar .thumb { flex: 301; }

/* graphics area */
.stage { flex: 1; min-width: 0; position: relative; overflow: hidden; background: #e8eaee; }
.scene { position: absolute; inset: 0; width: 100%; height: 100%; }
.clock { position: absolute; left: 22%; top: 29px; font: 15px/20px "Liberation Sans", Arial, sans-serif; color: #22598c; }
.viewbar {
  position: absolute;
  top: 7px;
  left: 633px;
  display: flex;
  height: 36px;
  padding: 0 2px;
  border: 1px solid #97999d;
  background: #f8f9fb;
}
.viewbar button { position: relative; width: 30px; padding-left: 7px; }
.viewbar .dd { width: 35px; }
.dd::after { content: ""; position: absolute; right: 5px; bottom: 5px; border: 2px solid #444; border-top-color: transparent; border-left-color: transparent; }

/* dialogs */
.dialog { position: absolute; background: #eef0f2; border: 1px solid #fff; box-shadow: 0 2px 8px rgba(0, 0, 0, .45); }
.dtitle { position: relative; display: flex; align-items: center; justify-content: center; height: 33px; background: #e5e7e9; color: #9fa1a4; }
.dtitle button { position: absolute; right: 12px; }
.x { width: 10px; height: 10px; fill: #8b8d90; }
.animate { top: 0; right: 0; width: 306px; height: 300px; }
.capture { top: 23px; right: 0; width: 384px; }
.fields { padding: 15px 11px 16px; display: flex; flex-direction: column; gap: 16px; }
.row { display: flex; align-items: center; gap: 6px; height: 27px; }
.row input[type="text"] { height: 27px; min-width: 0; border: 1px solid #b0b2b5; background: #fff; padding: 0 5px; outline: 0; }
.row .grow { flex: 1; }
.row .num { flex: 1; width: 84px; }
.by { padding: 0 1px; }
.preset { flex: none; width: 98px; }
.btn { height: 27px; padding: 0 10px; border: 1px solid #b0b2b5; background: #f8f8f9; color: #33363c; }
.combo { position: relative; display: block; height: 27px; border: 1px solid #a9acaf; background: #f8f8f9; }
.combo select { appearance: none; display: block; width: 100%; height: 25px; border: 0; outline: 0; background: none; padding: 0 19px 0 8px; }
.combo::before { content: ""; position: absolute; right: 18px; top: 0; bottom: 0; border-left: 1px solid #a9acaf; }
.combo::after { content: ""; position: absolute; right: 5px; top: 11px; border: 4px solid transparent; border-top-color: #54575b; border-bottom: 0; }
.fields h4 { font-weight: 600; margin: -3px 0 0; height: 45px; }
.check { padding-left: 14px; gap: 11px; }
.check input { appearance: none; width: 12px; height: 12px; border: 1px solid #777a7e; background: #fff; position: relative; }
.check input:checked::after { content: ""; position: absolute; left: 3px; top: 0; width: 4px; height: 7px; border: solid #222; border-width: 0 2px 2px 0; transform: rotate(40deg); }
.check label { margin-right: -6px; }
.tight { margin-top: -10px; }
.actions { display: flex; justify-content: flex-end; gap: 8px; height: 48px; padding: 10px 11px 0; border-top: 1px solid #c6c8cb; }
.ok, .wide, .stop { width: 60px; padding: 0; }
.ok { border-color: #7fcbf8; border-top: 2px solid #3ab2f3; background: #7dcdff; }
.cursor { position: absolute; width: 12px; height: 19px; left: 267px; top: 382px; }
.rendering { top: 277px; left: 628px; width: 128px; border-color: #9a9c9f; }
.rendering .dtitle { background: #dadbdd; height: 32px; border: solid #eef0f2; border-width: 1px 1px 0; }
.rendering .dtitle button { right: 11px; }
.rendering .x { fill: #66686c; }
.pbody { padding: 16px 11px 18px; }
.progress { position: relative; height: 21px; margin-top: 2px; border: 1px solid #bbbdc0; background: #fafafa; text-align: center; line-height: 19px; color: #5a3a2a; }
.progress i { position: absolute; left: 0; top: 0; bottom: 0; background: #74c9f8; }
.progress span { position: relative; }
.stop { background: #9cdcff; border-color: #6ec9f3; }

/* status bar */
.status { flex: none; display: flex; align-items: center; height: 46px; padding: 10px 18px 0 6px; border-top: 1px solid #b0b8bd; background: #f8faf9; }
.status > button { width: 26px; height: 26px; margin-right: 4px; display: grid; place-items: center; }
.status .pressed { border: 1px solid #a9abae; background: #dfe0e2; }
.status p { display: flex; gap: 5px; height: 26px; margin-left: 5px; padding-left: 8px; border-left: 1px solid #b0b3b6; font-size: 11px; line-height: 14px; }
.status p i { width: 5px; height: 5px; margin-top: 4px; border-radius: 50%; background: #14507c; }
.right { margin: -6px 0 0 auto; display: flex; align-items: center; }
.rg { width: 61px; height: 34px; padding-left: 4px; border-left: 1px solid #b0b3b6; }
.find { display: flex; height: 34px; padding: 2px; border: solid #b0b3b6; border-width: 0 1px; margin-right: 90px; }
.find button { width: 19px; display: grid; place-items: center; border: 1px solid #c3c5c8; background: #f9f9fa; }
.find button:first-child { width: 32px; border-right: 0; }
.selfilter { width: 169px; }
```
